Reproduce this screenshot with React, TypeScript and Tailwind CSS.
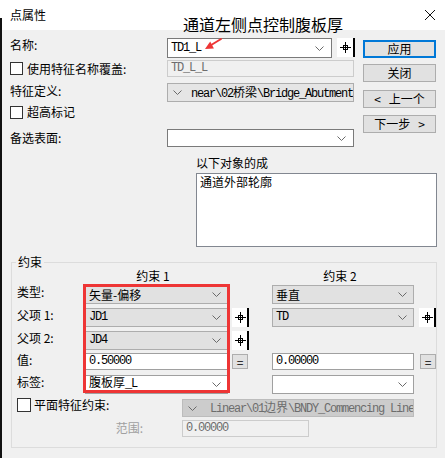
import React from "react";

const MONO = "font-['Liberation_Mono','Noto_Sans_CJK_SC',monospace] text-[12px] tracking-[-1.2px]";

function Chevron() {
  return (
    <svg width="9" height="5" viewBox="0 0 9 5" className="shrink-0">
      <path d="M0.5 0.5 L4.5 4.5 L8.5 0.5" fill="none" stroke="#6a6a6a" strokeWidth="1" />
    </svg>
  );
}

function Cross() {
  return (
    <svg width="11" height="11" viewBox="0 0 11 11">
      <path d="M0 5.5 H11 M5.5 0 V11" stroke="#000" strokeWidth="1" />
      <rect x="3.5" y="3.5" width="4" height="4" fill="none" stroke="#000" strokeWidth="1" />
    </svg>
  );
}

function Pin() {
  return (
    <div className="w-[17px] h-[19px] shrink-0 bg-white border-r-2 border-black flex items-center justify-center pl-[1px]">
      <Cross />
    </div>
  );
}

function EqBtn() {
  return (
    <div className="w-[16px] h-[15px] shrink-0 bg-[#e1e1e1] border border-[#adadad] flex items-center justify-center text-[12px] leading-[12px]">
      =
    </div>
  );
}

function Checkbox() {
  return <div className="w-[13px] h-[13px] shrink-0 bg-white border border-[#333333]" />;
}

function Combo({ className, children }: { className: string; children?: React.ReactNode }) {
  return (
    <div className={"shrink-0 flex items-center justify-between pl-[3px] pr-[6px] " + className}>
      <div className="flex items-center whitespace-nowrap leading-[17px]">{children}</div>
      <Chevron />
    </div>
  );
}

function Cjk({ children }: { children: React.ReactNode }) {
  return <span className="tracking-normal font-['Noto_Sans_CJK_SC',sans-serif] text-[12px]">{children}</span>;
}

function Btn({ children, primary }: { children: React.ReactNode; primary?: boolean }) {
  return (
    <div
      className={
        "h-[18px] w-[73px] bg-[#e1e1e1] flex items-center justify-center text-[12px] leading-[14px] " +
        (primary ? "border-2 border-[#0078d7]" : "border border-[#adadad]")
      }
    >
      {children}
    </div>
  );
}

export default function App() {
  return (
    <div className="relative w-[445px] h-[458px] bg-[#f0f0f0] overflow-hidden font-['Noto_Sans_CJK_SC',sans-serif] text-[12px] leading-[14px] text-black">
      {/* title bar */}
      <div className="h-[30px] bg-white flex items-center justify-between pl-[10px] pr-[10px]">
        <span className="leading-[14px] -mt-[1px]">点属性</span>
        <svg width="10" height="10" viewBox="0 0 10 10" className="-mt-[1px]">
          <path d="M0 0 L10 10 M10 0 L0 10" stroke="#111" strokeWidth="1" />
        </svg>
      </div>

      {/* top section */}
      <div className="flex pl-[10px]">
        <div className="w-[345px] flex flex-col">
          {/* row 1 */}
          <div className="mt-[8px] h-[20px] flex items-start">
            <div className="w-[157px]">名称:</div>
            <div className="w-[165px] h-[20px] bg-white border border-[#7a7a7a] flex items-center justify-between pl-[3px] pr-[7px]">
              <span className={MONO + " leading-[17px]"}>TD1_L</span>
              <Chevron />
            </div>
            <div className="ml-[5px] w-[18px] h-[19px] bg-white border-r-2 border-black flex items-center justify-center">
              <Cross />
            </div>
          </div>
          {/* row 2 */}
          <div className="mt-[2px] h-[17px] flex items-center">
            <div className="w-[157px] flex items-center gap-[4px]">
              <Checkbox />
              <span>使用特征名称覆盖:</span>
            </div>
            <div className="w-[187px] h-[17px] border border-[#cccccc] bg-[#f0f0f0] flex items-center pl-[3px]">
              <span className={MONO + " text-[#6d6d6d] leading-[15px]"}>TD_L_L</span>
            </div>
          </div>
          {/* row 3 */}
          <div className="mt-[6px] h-[19px] flex items-start">
            <div className="w-[157px] mt-[1px]">特征定义:</div>
            <div className="w-[187px] h-[19px] bg-[#e5e5e5] border border-[#adadad] flex items-center pl-[5px] overflow-hidden whitespace-nowrap">
              <Chevron />
              <span className={MONO + " ml-[9px]"}>
                near\02<Cjk>桥梁</Cjk>\Bridge_Abutment
              </span>
            </div>
          </div>
          {/* row 4 */}
          <div className="mt-[2px] h-[16px] flex items-center gap-[4px]">
            <Checkbox />
            <span>超高标记</span>
          </div>
          {/* row 5 */}
          <div className="mt-[9px] h-[18px] flex items-start">
            <div className="w-[157px] mt-[2px]">备选表面:</div>
            <div className="w-[187px] h-[18px] bg-white border border-[#7a7a7a] flex items-center justify-end pr-[7px]">
              <Chevron />
            </div>
          </div>
        </div>
        <div className="ml-[8px] w-[73px] flex flex-col">
          <div className="mt-[10px]">
            <Btn primary>应用</Btn>
          </div>
          <div className="mt-[6px]">
            <Btn>关闭</Btn>
          </div>
          <div className="mt-[8px]">
            <Btn>
              <span className="mr-[8px]">&lt;</span>上一个
            </Btn>
          </div>
          <div className="mt-[7px]">
            <Btn>
              下一步<span className="ml-[8px]">&gt;</span>
            </Btn>
          </div>
        </div>
      </div>

      {/* object list */}
      <div className="ml-[196px] mt-[9px] h-[14px]">以下对象的成</div>
      <div className="ml-[196px] mt-[3px] w-[241px] h-[74px] bg-white border border-[#828790] pl-[3px] pt-[1px]">
        通道外部轮廓
      </div>

      {/* constraint group */}
      <fieldset className="ml-[11px] mt-[8px] w-[426px] border border-[#dcdcdc] pb-[10px]">
        <legend className="ml-[4px] px-[2px] leading-[14px]">约束</legend>
        {/* headers */}
        <div className="flex h-[14px] pl-[73px]">
          <div className="w-[143px] text-center pr-[7px]">约束 1</div>
          <div className="w-[44px]" />
          <div className="w-[142px] text-center pr-[6px]">约束 2</div>
        </div>
        {/* 类型 */}
        <div className="mt-[2px] h-[19px] flex items-start pl-[5px]">
          <div className="w-[68px] shrink-0">类型:</div>
          <Combo className="w-[143px] h-[19px] bg-[#e1e1e1] border border-[#adadad]">
            <span>矢量-偏移</span>
          </Combo>
          <div className="w-[44px] shrink-0" />
          <Combo className="w-[142px] h-[19px] bg-[#e1e1e1] border border-[#adadad]">
            <span>垂直</span>
          </Combo>
        </div>
        {/* 父项 1 */}
        <div className="mt-[4px] h-[19px] flex items-start pl-[5px]">
          <div className="w-[68px] shrink-0">父项 1:</div>
          <Combo className="w-[143px] h-[19px] bg-[#e1e1e1] border border-[#adadad]">
            <span className={MONO}>JD1</span>
          </Combo>
          <div className="ml-[4px]">
            <Pin />
          </div>
          <div className="w-[23px] shrink-0" />
          <Combo className="w-[142px] h-[19px] bg-[#e1e1e1] border border-[#adadad]">
            <span className={MONO}>TD</span>
          </Combo>
          <div className="ml-[5px]">
            <Pin />
          </div>
        </div>
        {/* 父项 2 */}
        <div className="mt-[4px] h-[19px] flex items-start pl-[5px]">
          <div className="w-[68px] shrink-0">父项 2:</div>
          <Combo className="w-[143px] h-[19px] bg-[#e1e1e1] border border-[#adadad]">
            <span className={MONO}>JD4</span>
          </Combo>
          <div className="ml-[4px]">
            <Pin />
          </div>
        </div>
        {/* 值 */}
        <div className="mt-[3px] h-[17px] flex items-start pl-[5px]">
          <div className="w-[68px] shrink-0">值:</div>
          <div className="w-[143px] h-[17px] shrink-0 bg-white border border-[#a0a0a0] flex items-center pl-[3px]">
            <span className={MONO + " leading-[15px]"}>0.50000</span>
          </div>
          <div className="ml-[4px] w-[17px] h-[17px] flex items-center">
            <EqBtn />
          </div>
          <div className="w-[23px] shrink-0" />
          <div className="w-[142px] h-[17px] shrink-0 bg-white border border-[#a0a0a0] flex items-center pl-[3px]">
            <span className={MONO + " leading-[15px]"}>0.00000</span>
          </div>
          <div className="ml-[5px] w-[17px] h-[17px] flex items-center justify-end">
            <EqBtn />
          </div>
        </div>
        {/* 标签 */}
        <div className="mt-[5px] h-[19px] flex items-start pl-[5px]">
          <div className="w-[68px] shrink-0">标签:</div>
          <Combo className="w-[143px] h-[19px] bg-white border border-[#a0a0a0]">
            <span className={MONO + " leading-[14px] mb-[4px]"}>
              <Cjk>腹板厚</Cjk>_L
            </span>
          </Combo>
          <div className="w-[44px] shrink-0" />
          <Combo className="w-[142px] h-[19px] bg-white border border-[#a0a0a0]" />
        </div>
        {/* 平面特征约束 */}
        <div className="mt-[4px] h-[19px] flex items-start pl-[5px]">
          <div className="w-[165px] shrink-0 flex items-center gap-[3px]">
            <div className="w-[14px] h-[14px] bg-white border border-[#333333]" />
            <span>平面特征约束:</span>
          </div>
          <div className="w-[232px] h-[18px] mt-[1px] bg-[#cccccc] border border-[#bcbcbc] flex items-center pl-[5px] whitespace-nowrap overflow-hidden">
            <Chevron />
            <span className={MONO + " ml-[13px] text-[#6d6d6d] leading-[16px]"}>
              Linear\01<Cjk>边界</Cjk>\BNDY_Commencing Line
            </span>
          </div>
        </div>
        {/* 范围 */}
        <div className="mt-[3px] h-[17px] flex items-start pl-[5px]">
          <div className="w-[165px] shrink-0 text-right pr-[39px] text-[#a0a0a0] mt-[1px]">范围:</div>
          <div className="w-[127px] h-[17px] bg-[#f0f0f0] border border-[#cccccc] flex items-center pl-[3px]">
            <span className={MONO + " text-[#6d6d6d] leading-[15px]"}>0.00000</span>
          </div>
        </div>
      </fieldset>

      {/* overlays: annotation */}
      <div className="absolute left-[183px] top-[14px] text-[16px] leading-[20px] whitespace-nowrap">通道左侧点控制腹板厚</div>
      <svg className="absolute left-[200px] top-[34px]" width="28" height="20" viewBox="0 0 28 20">
        <path d="M21 5 L12 10.5" stroke="#ee3535" strokeWidth="2" strokeLinecap="round" />
        <path d="M5 15 L13.9 14.5 L10.2 7.4 Z" fill="#ee3535" />
      </svg>
      <div className="absolute left-[83px] top-[284px] w-[147px] h-[109px] border-[3px] border-[#ee3535]" />
      <div className="absolute left-0 top-[18px] w-[2px] h-[440px] bg-[#111111]" />
    </div>
  );
}
